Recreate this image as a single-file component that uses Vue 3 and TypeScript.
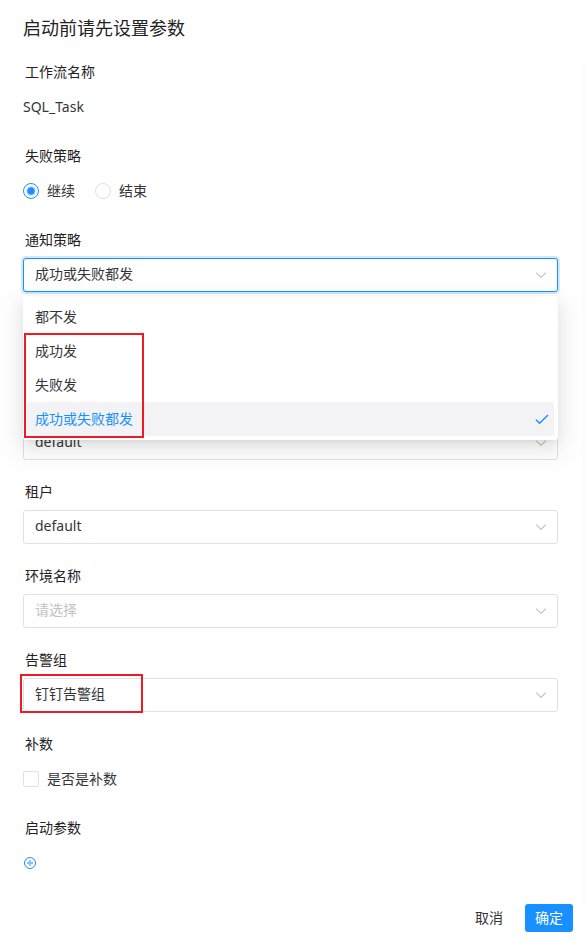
<script setup lang="ts">
import { ref } from 'vue'

interface SelectField {
  id: string
  label: string
  name: string
  value: string
  options: string[]
  open?: boolean
  marked?: boolean
}

const failure = ref('继续')
const complement = ref(false)

const fields = ref<SelectField[]>([
  {
    id: 'notice',
    label: '通知策略',
    name: '通知策略',
    value: '成功或失败都发',
    options: ['都不发', '成功发', '失败发', '成功或失败都发'],
    open: true,
  },
  { id: 'priority', label: '', name: 'priority', value: '', options: [] },
  { id: 'worker', label: '', name: 'worker', value: 'default', options: ['default'] },
  { id: 'tenant', label: '租户', name: '租户', value: 'default', options: ['default'] },
  { id: 'environment', label: '环境名称', name: '环境名称', value: '', options: [] },
  { id: 'alarm', label: '告警组', name: '告警组', value: '钉钉告警组', options: ['钉钉告警组'], marked: true },
])

function choose(field: SelectField, option: string) {
  field.value = option
}
</script>

<template>
  <main class="dialog">
    <h1 class="title">启动前请先设置参数</h1>

    <form class="form" @submit.prevent>
      <div class="item">
        <div class="label">工作流名称</div>
        <div class="control">SQL_Task</div>
      </div>

      <div class="item" role="radiogroup" aria-labelledby="failure-label">
        <div id="failure-label" class="label">失败策略</div>
        <div class="control choices">
          <label v-for="option in ['继续', '结束']" :key="option" class="choice">
            <input v-model="failure" class="radio" type="radio" name="failure" :value="option" />
            <span>{{ option }}</span>
          </label>
        </div>
      </div>

      <div v-for="field in fields" :key="field.id" class="item">
        <label class="label" :for="field.id">{{ field.label }}</label>
        <div class="control select-box">
          <select
            :id="field.id"
            v-model="field.value"
            class="select"
            :class="{ active: field.open, empty: !field.value }"
            :aria-label="field.name"
          >
            <option v-if="!field.value" value="">请选择</option>
            <option v-for="option in field.options" :key="option" :value="option">{{ option }}</option>
          </select>
          <svg class="arrow" viewBox="0 0 16 16" aria-hidden="true">
            <path d="M3.2 5.6 8 10.4l4.8-4.8" fill="none" stroke="currentColor" stroke-width="1.1" />
          </svg>
          <ul v-if="field.open" class="menu" role="listbox">
            <li
              v-for="option in field.options"
              :key="option"
              class="option"
              :class="{ selected: option === field.value }"
              role="option"
              :aria-selected="option === field.value"
              @click="choose(field, option)"
            >
              <span>{{ option }}</span>
              <svg v-if="option === field.value" class="check" viewBox="0 0 16 16" aria-hidden="true">
                <path d="M2 8.8 5.6 12.2 14 4" fill="none" stroke="currentColor" stroke-width="1.4" />
              </svg>
            </li>
            <li class="mark mark-options" role="presentation"></li>
          </ul>
          <span v-if="field.marked" class="mark mark-field"></span>
        </div>
      </div>

      <div class="item">
        <div class="label">补数</div>
        <div class="control">
          <label class="choice">
            <input v-model="complement" class="checkbox" type="checkbox" />
            <span>是否是补数</span>
          </label>
        </div>
      </div>

      <div class="item">
        <div class="label">启动参数</div>
        <div class="control">
          <button class="add" type="button" aria-label="启动参数">
            <svg viewBox="0 0 14 14" aria-hidden="true">
              <circle cx="7" cy="7" r="5.5" fill="none" stroke="currentColor" />
              <path d="M7 4v6M4 7h6" fill="none" stroke="currentColor" stroke-width="1.8" opacity=".55" />
            </svg>
          </button>
        </div>
      </div>
    </form>

    <footer class="footer">
      <button class="cancel" type="button">取消</button>
      <button class="confirm" type="button">确定</button>
    </footer>
  </main>
</template>

<style>
body {
  background: #fff;
}
</style>

<style scoped>
.dialog,
.dialog * {
  box-sizing: border-box;
}

.dialog {
  color: #333639;
  font-family: "Noto Sans", "Noto Sans CJK SC", sans-serif;
  font-size: 14px;
  line-height: 20px;
}

.title {
  margin: 0;
  padding: 14px 23px 22px;
  color: #1f2225;
  font-size: 18px;
  font-weight: 400;
  line-height: 28px;
}

.form {
  padding: 0 24px 0 23px;
  border-right: 3px solid #fcfcfc;
}

.item {
  padding-bottom: 24px;
}

.label {
  display: block;
  height: 26px;
  padding-left: 2px;
  color: #1f2225;
  line-height: 16px;
}

.control {
  display: flex;
  align-items: center;
  height: 34px;
}

.choices {
  gap: 20px;
}

.choice {
  display: flex;
  align-items: center;
  gap: 8px;
}

.radio,
.checkbox {
  flex: none;
  width: 16px;
  height: 16px;
  margin: 0;
  border: 1px solid #e0e0e6;
  background: #fff;
  appearance: none;
}

.radio {
  border-radius: 50%;
}

.radio:checked {
  border-color: #1890ff;
  background: radial-gradient(circle, #1890ff 3px, #fff 5px);
}

.checkbox {
  border-radius: 2px;
}

.checkbox:checked {
  border-color: #1890ff;
  background: #1890ff;
}

.select-box {
  position: relative;
}

.select {
  width: 100%;
  height: 34px;
  padding: 0 36px 2px 11px;
  border: 1px solid #e0e0e6;
  border-radius: 3px;
  outline: none;
  background: #fff;
  color: #333639;
  font: inherit;
  appearance: none;
}

.select.empty {
  color: #c2c2c2;
}

.select.active {
  border-color: #1890ff;
  box-shadow: 0 0 0 2px rgba(24, 144, 255, 0.2);
}

.arrow {
  position: absolute;
  top: 9px;
  right: 9px;
  width: 16px;
  height: 16px;
  color: #c2c2c2;
  pointer-events: none;
}

.menu {
  position: absolute;
  z-index: 2;
  top: 38px;
  left: 0;
  width: 100%;
  margin: 0;
  padding: 4px;
  border-radius: 3px;
  background: #fff;
  box-shadow:
    0 3px 6px -4px rgba(0, 0, 0, 0.12),
    0 6px 16px 0 rgba(0, 0, 0, 0.08),
    0 9px 28px 8px rgba(0, 0, 0, 0.05);
  list-style: none;
}

.option {
  display: flex;
  align-items: center;
  justify-content: space-between;
  height: 34px;
  padding: 0 4px 0 8px;
  border-radius: 3px;
  cursor: pointer;
}

.option.selected {
  background: #f3f3f5;
  color: #1890ff;
}

.check {
  width: 16px;
  height: 16px;
}

.mark {
  position: absolute;
  border: 2px solid #ed1c24;
  pointer-events: none;
}

.mark-options {
  top: 37px;
  left: 1px;
  width: 120px;
  height: 105px;
}

.mark-field {
  top: -4px;
  left: -3px;
  width: 123px;
  height: 39px;
}

.add {
  width: 14px;
  height: 14px;
  padding: 0;
  border: 0;
  background: none;
  color: #1890ff;
}

.add svg {
  display: block;
}

.footer {
  display: flex;
  justify-content: flex-end;
  gap: 12px;
  padding: 0 12px 19px;
}

.cancel,
.confirm {
  height: 28px;
  padding: 0 10px;
  border: 0;
  border-radius: 3px;
  background: none;
  color: #333639;
  font: inherit;
}

.confirm {
  background: #1890ff;
  color: #fff;
}
</style>
